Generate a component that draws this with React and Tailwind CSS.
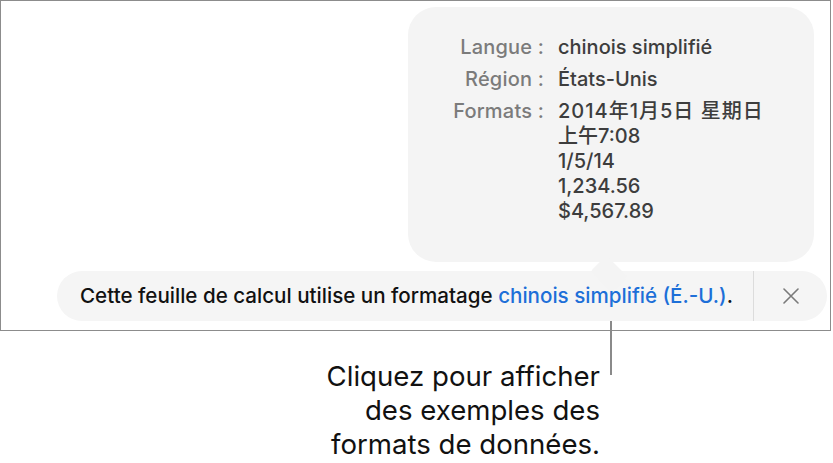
import React from "react";

export default function App() {
  const rows = [
    ["Langue\u00a0:", ["chinois simplifié"]],
    ["Région\u00a0:", ["États-Unis"]],
    ["Formats\u00a0:", ["2014年1月5日 星期日", "上午7:08", "1/5/14", "1,234.56", "$4,567.89"]],
  ];
  return (
    <div className="relative w-[833px] h-[463px] bg-white overflow-hidden" style={{ fontFamily: "Inter, 'Noto Sans CJK SC', sans-serif" }}>
      <div className="w-[831px] h-[331px] border border-[#8c8c8c] pt-[6px] flex flex-col">
        <div className="relative ml-[407px] w-[406px] h-[255px] rounded-[28px] bg-[#f4f4f4] pt-[28px] flex flex-col gap-[7px] text-[20px] leading-[25px] font-medium">
          {rows.map(([label, vals]) => (
            <div key={label} className="flex">
              <div className="w-[136px] shrink-0 text-right text-[#7b7b7b] tracking-[0.2px]">{label}</div>
              <div className="ml-[14px] flex flex-col text-[#3d3d3d]">
                {vals.map((v, i) => (
                  <div key={v} className={v.includes("星") ? "tracking-[1px]" : ""}>{v}</div>
                ))}
              </div>
            </div>
          ))}
          <div className="absolute left-[186px] top-[252px] w-[30px] h-[30px] bg-[#f4f4f4] rotate-45 rounded-[4px] scale-y-[0.75]"></div>
        </div>
        <div className="mt-[9px] ml-[56px] w-[770px] h-[50px] rounded-full bg-[#f5f5f5] flex items-center text-[20.6px] font-medium text-[#111]">
          <div className="relative z-10 pl-[23px] flex-1 whitespace-nowrap">
            Cette feuille de calcul utilise un formatage <span className="text-[#1d6fd8]">chinois simplifié (É.-U.)</span>.
          </div>
          <div className="w-px self-stretch bg-[#dcdcdc]"></div>
          <div className="w-[73px] flex items-center justify-center">
            <svg width="16" height="16" viewBox="0 0 16 16" fill="none" stroke="#7a7a7a" strokeWidth="1.6" strokeLinecap="round">
              <path d="M1 1 L15 15 M15 1 L1 15" />
            </svg>
          </div>
        </div>
      </div>
      <div className="absolute left-[610px] top-[321px] w-[2px] h-[54px] bg-[#8a8a8a]"></div>
      <div className="w-[600px] mt-[28px] text-right text-[27.6px] leading-[34px] text-[#111]">
        <div>Cliquez pour afficher</div>
        <div>des exemples des</div>
        <div>formats de données.</div>
      </div>
    </div>
  );
}
